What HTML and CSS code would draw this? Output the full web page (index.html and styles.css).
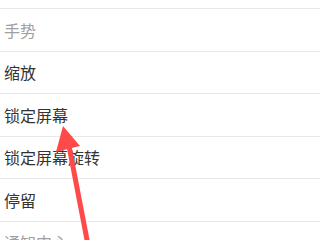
FILE: index.html
```html
<!DOCTYPE html>
<html>
<head>
<meta charset="utf-8">
<link rel="stylesheet" href="styles.css">
</head>
<body>
<div class="screen">
  <div class="top"></div>
  <div class="row muted">手势</div>
  <div class="row">缩放</div>
  <div class="row">锁定屏幕</div>
  <div class="row">锁定屏幕旋转</div>
  <div class="row">停留</div>
  <div class="row muted">通知中心</div>
  <svg class="arrow" width="320" height="240" viewBox="0 0 320 240">
    <line x1="88" y1="245" x2="69" y2="146" stroke="#ff4a4a" stroke-width="5" stroke-linecap="round"/>
    <polygon points="63,126 80,146 56,152" fill="#ff4a4a"/>
  </svg>
</div>
</body>
</html>
```
FILE: styles.css
```css
html, body {
  margin: 0;
  padding: 0;
  background: #ffffff;
}
.screen {
  position: relative;
  width: 320px;
  height: 240px;
  overflow: hidden;
  font-family: "Noto Sans CJK SC", "Noto Sans", sans-serif;
}
.top {
  height: 8px;
  border-bottom: 1px solid #e8e8e8;
}
.row {
  height: 41.5px;
  border-bottom: 1px solid #e8e8e8;
  display: flex;
  align-items: center;
  padding-left: 4px;
  font-size: 16px;
  color: #333333;
}
.muted {
  color: #a0a0a0;
}
.arrow {
  position: absolute;
  left: 0;
  top: 0;
}
```
